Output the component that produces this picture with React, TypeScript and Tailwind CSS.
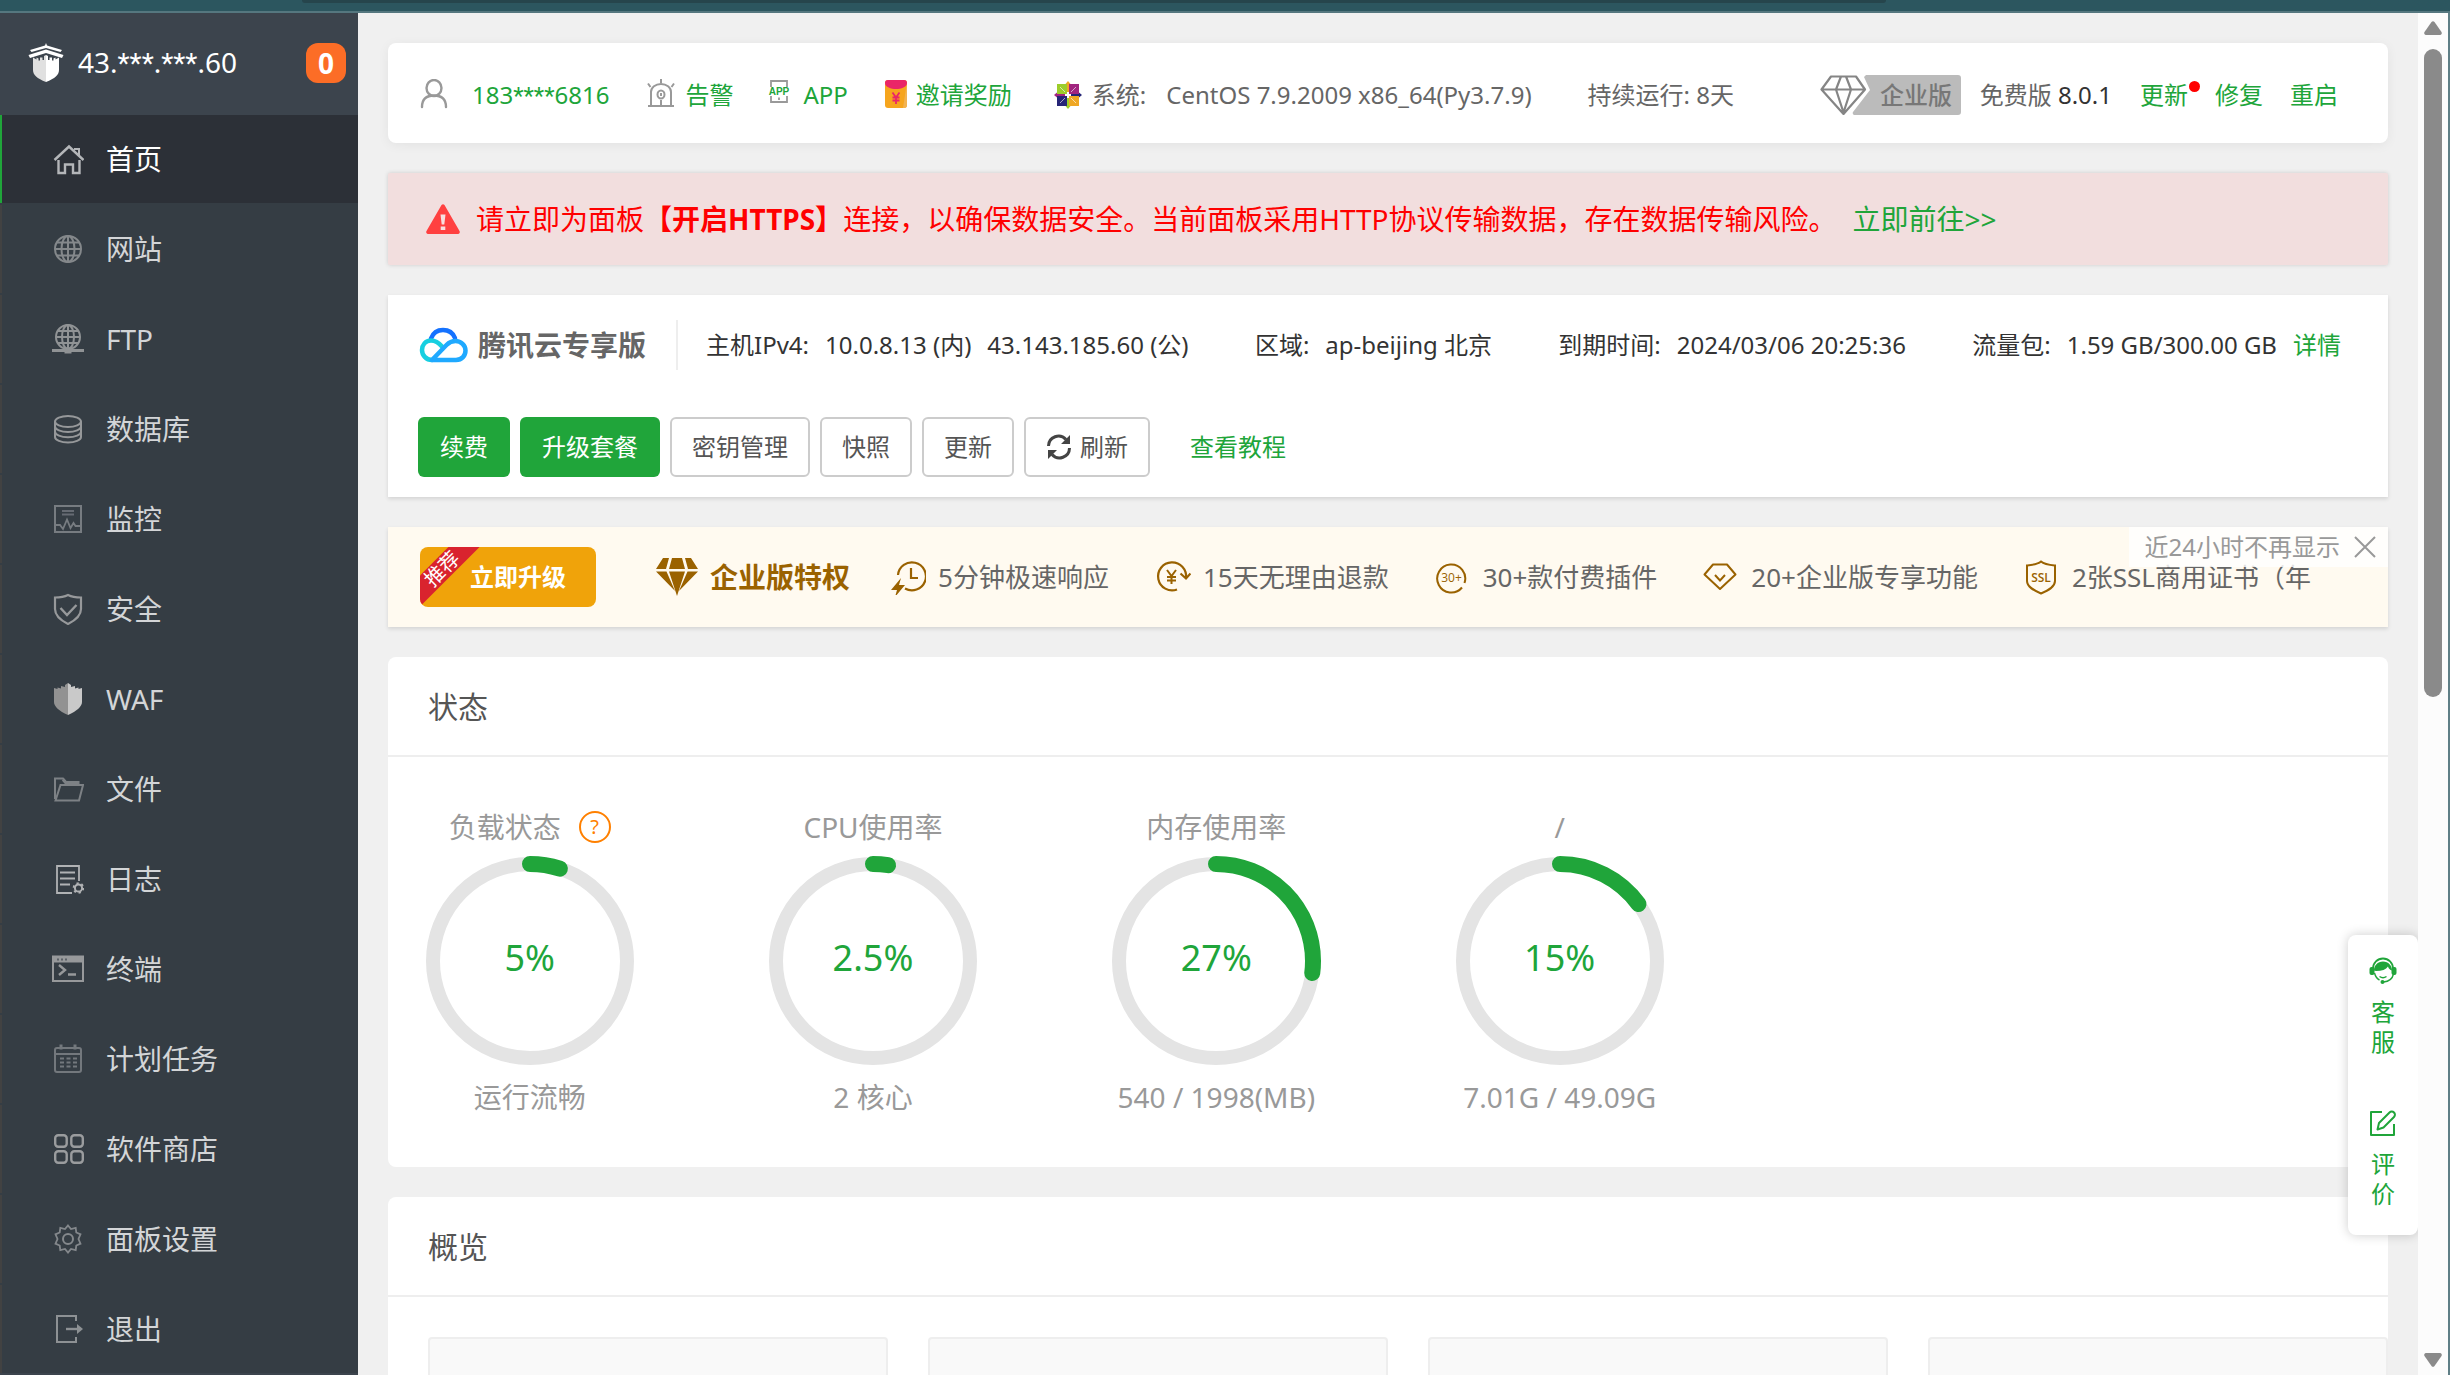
import type { ReactNode } from "react";

const GREEN = "#20a53a";
const BROWN = "#9a6200";

/* ---------- sidebar icons (32x32) ---------- */

function MenuIcon({ children, color = "#8d9093" }: { children: ReactNode; color?: string }) {
  return (
    <svg className="size-8 shrink-0" viewBox="0 0 32 32" fill="none" stroke={color} strokeWidth="2" aria-hidden="true">
      {children}
    </svg>
  );
}

const HomeIcon = (
  <MenuIcon color="#b4b6b9">
    <path d="M2.5 17 17 3.500 31.500 17" strokeWidth="2.4" />
    <path d="M22 6h5v6" />
    <path d="M6.500 17v13H13v-8.500h8V30h6.500V17" strokeWidth="2.4" />
  </MenuIcon>
);
const GlobeIcon = (
  <MenuIcon color="#84888b">
    <circle cx="16" cy="16" r="13" />
    <ellipse cx="16" cy="16" rx="6.5" ry="13" />
    <path d="M16 3v26M3 16h26M5 9.500h22M5 22.500h22" />
  </MenuIcon>
);
const FtpIcon = (
  <MenuIcon color="#909395">
    <circle cx="16" cy="14" r="12" />
    <ellipse cx="16" cy="14" rx="6" ry="12" />
    <path d="M16 2v24M4 14h24M6 8h20M6 20h20" />
    <path d="M0 27.500h32" strokeWidth="3" />
    <path d="M12.500 27.500h7" strokeWidth="6" />
  </MenuIcon>
);
const DatabaseIcon = (
  <MenuIcon color="#96989a">
    <ellipse cx="16" cy="8.5" rx="13" ry="5.5" />
    <path d="M3 8.500V24c0 3 6 5.500 13 5.500S29 27 29 24V8.500" />
    <path d="M3 13.500c0 3 6 5.500 13 5.500s13-2.500 13-5.500M3 18.700c0 3 6 5.500 13 5.500s13-2.500 13-5.500" />
  </MenuIcon>
);
const MonitorIcon = (
  <MenuIcon color="#777c81">
    <rect x="3" y="3" width="26" height="26" />
    <path d="M10 8h12M10 11.500h12" strokeWidth="2.2" stroke="#666b73" />
    <path d="M4 22h4l3 4 4-9.500 3.500 8.500 3-5 2 3h5" strokeWidth="1.8" />
  </MenuIcon>
);
const SafeIcon = (
  <MenuIcon color="#97999b">
    <path d="M16 2c4 2 8 2.500 13 2.500V16c0 7-6 11.500-13 15C9 27.500 3 23 3 16V4.500C8 4.500 12 4 16 2Z" strokeWidth="2.2" />
    <path d="m8.500 15 6.500 7 9.500-10" strokeWidth="2.4" />
  </MenuIcon>
);
const WafIcon = (
  <MenuIcon>
    <path d="M16 0v32C7 28 2 23.500 2 19V5l3.500 1V4.500L9 5.500V3l4 1V2Z" fill="#929292" stroke="none" />
    <path d="M16 0v32c9-4 14-8.500 14-13V5l-3.500 1V4.500L23 5.500V3l-4 1V2Z" fill="#c9c9c9" stroke="none" />
  </MenuIcon>
);
const FolderIcon = (
  <MenuIcon color="#7d8185">
    <path d="M3 26V5.500h8l3 3.500h12.500v3" />
    <path d="M11 6.500 14 10h13" strokeWidth="3" />
    <path d="M3.500 27.500 8.500 12H31l-4 15.500Z" />
  </MenuIcon>
);
const LogIcon = (
  <MenuIcon color="#b0b2b4">
    <path d="M20 30H5V3h22v15" strokeWidth="1.8" />
    <path d="M8 9.500h15M8 15.500h15M8 21.500h10" strokeWidth="1.8" />
    <circle cx="26.5" cy="25" r="3.6" />
    <circle cx="26.5" cy="25" r="4.8" strokeDasharray="2.2 2.8" />
  </MenuIcon>
);
const TerminalIcon = (
  <MenuIcon color="#97999b">
    <rect x="1" y="3.5" width="30" height="24.5" />
    <path d="M1 6.500h30" strokeWidth="6" />
    <path d="M5 6.500h10" stroke="#5b6167" strokeDasharray="2 2" />
    <path d="m7 12 6 5-6 5M16 21.500h8" strokeWidth="2.4" />
  </MenuIcon>
);
const CalendarIcon = (
  <MenuIcon color="#73787d">
    <rect x="3" y="5" width="26" height="24" rx="2" />
    <path d="M3 11h26" />
    <path d="M9 1.500v5M23 1.500v5" strokeWidth="3" />
    <path d="M8 15.500h17M8 19.500h17M8 23.500h17" strokeDasharray="4 2.5" />
  </MenuIcon>
);
const StoreIcon = (
  <MenuIcon color="#9a9c9e">
    <rect x="3.2" y="2.2" width="11.5" height="11.5" rx="3" strokeWidth="2.4" />
    <rect x="19.3" y="2.2" width="11.5" height="11.5" rx="3" strokeWidth="2.4" />
    <rect x="3.2" y="18.3" width="11.5" height="11.5" rx="3" strokeWidth="2.4" />
    <rect x="19.3" y="18.3" width="11.5" height="11.5" rx="3" strokeWidth="2.4" />
  </MenuIcon>
);
const GearIcon = (
  <MenuIcon color="#84888c">
    <path d="m16 2.500 3 3.600 4.700-1.300.6 4.700 4.200 1.800L26.500 16l2 4.700-4.200 1.800-.6 4.700-4.700-1.300-3 3.600-3-3.600-4.700 1.300-.6-4.700-4.200-1.800 2-4.700-2-4.700 4.200-1.800.6-4.700L13 6.100Z" strokeWidth="1.8" />
    <circle cx="16" cy="16" r="5" />
  </MenuIcon>
);
const ExitIcon = (
  <MenuIcon color="#8d9194">
    <path d="M24 8V3H5v26h19v-5" />
    <path d="M14 16h15" strokeWidth="2.4" />
    <path d="m25 11 6 5-6 5Z" fill="#8d9194" stroke="none" />
  </MenuIcon>
);

const MENU: { label: string; icon: ReactNode }[] = [
  { label: "首页", icon: HomeIcon },
  { label: "网站", icon: GlobeIcon },
  { label: "FTP", icon: FtpIcon },
  { label: "数据库", icon: DatabaseIcon },
  { label: "监控", icon: MonitorIcon },
  { label: "安全", icon: SafeIcon },
  { label: "WAF", icon: WafIcon },
  { label: "文件", icon: FolderIcon },
  { label: "日志", icon: LogIcon },
  { label: "终端", icon: TerminalIcon },
  { label: "计划任务", icon: CalendarIcon },
  { label: "软件商店", icon: StoreIcon },
  { label: "面板设置", icon: GearIcon },
  { label: "退出", icon: ExitIcon },
];

function Stars({ n }: { n: number }) {
  return <span className="font-['Roboto']">{"*".repeat(n)}</span>;
}

function Sidebar() {
  return (
    <aside className="flex w-[358px] shrink-0 flex-col bg-[#3c444d]">
      <div className="flex h-[102px] items-center pr-3 pb-0.5 pl-7">
        <svg className="h-10 w-9 shrink-0" viewBox="0 0 36 40" aria-label="宝塔" role="img">
          <path d="M18 0l1 2.500L34 7l-1.500 2L18 5 3.500 9 2 7l15-4.500Z" fill="#fff" />
          <path d="M18 6.500 35.500 12l-1.500 3-16-5-16 5-1.500-3Z" fill="#fff" />
          <path d="M18 12v27C9 35.500 5 32 5 27V14.500l3.500 2v-2l2 1v2h1.500v-3h2.500V17h1.500v-4Z" fill="#e0e0e0" />
          <path d="M18 12v27c9-3.500 13-7 13-12V14.500l-3.500 2v-2l-2 1v2H24v-3h-2.500V17H20v-4Z" fill="#fff" />
        </svg>
        <span className="pl-3.5 text-[28px] leading-10 text-white">
          43.
          <Stars n={3} />.<Stars n={3} />
          .60
        </span>
        <button type="button" className="ml-auto size-10 rounded-xl bg-[#fc6d26] text-[28px] leading-10 font-bold text-white">
          0
        </button>
      </div>
      <nav className="flex flex-col gap-0.5 bg-[#353d44]">
        {MENU.map((m, i) => (
          <a
            key={m.label}
            href="#"
            className={
              i === 0
                ? "flex h-[88px] items-center gap-[22px] border-l-2 border-[#20a53a] bg-[#2c3037] pl-[50px] text-[28px] leading-10 text-white"
                : "flex h-[88px] items-center gap-[22px] border-l-2 border-[#424242] pl-[50px] text-[28px] leading-10 text-[#d3d5d7]"
            }
          >
            {m.icon}
            {m.label}
          </a>
        ))}
      </nav>
    </aside>
  );
}

/* ---------- top bar ---------- */

function TopInfo() {
  return (
    <section className="flex h-[100px] items-center rounded-lg bg-white pt-1 pr-[50px] pl-8 text-2xl leading-9 text-[#666] shadow-[0_2px_12px_rgba(0,0,0,0.06)]">
      <svg className="h-8 w-7" viewBox="0 0 28 32" fill="none" stroke="#999" strokeWidth="2.4" strokeLinecap="round" aria-hidden="true">
        <ellipse cx="14" cy="9" rx="7.5" ry="8" />
        <path d="M2 28c0-8 4.500-11.500 12-11.500S26 20 26 28" />
      </svg>
      <a href="#" className="ml-6 text-[#20a53a]">
        183
        <Stars n={4} />
        6816
      </a>
      <a href="#" className="ml-[38px] flex items-center gap-2.5 text-[#20a53a]">
        <svg className="h-8 w-7" viewBox="0 0 28 32" fill="none" stroke="#999" strokeWidth="2" aria-hidden="true">
          <path d="M14 0v4M1 4.500 3.500 8M27 4.500 24.500 8" />
          <path d="M4 26V13a10 8 0 0 1 20 0v13M1 27h26" />
          <ellipse cx="14" cy="15.500" rx="3.5" ry="4" />
          <path d="M14 14v3M14 21v5" />
        </svg>
        告警
      </a>
      <a href="#" className="ml-[34px] flex items-center gap-3 text-[#20a53a]">
        <svg className="h-8 w-6" viewBox="0 0 24 32" fill="none" stroke="#999" strokeWidth="1.8" aria-hidden="true">
          <path d="M4 8V2h16v6M4 17v6h16v-6M12 18.500v2.500" />
          <text x="12" y="16" textAnchor="middle" fontSize="10" fontWeight="700" fontFamily="Liberation Sans" fill={GREEN} stroke="none">
            APP
          </text>
        </svg>
        APP
      </a>
      <a href="#" className="ml-9 flex items-center gap-2 text-[#20a53a]">
        <svg className="h-8 w-6" viewBox="0 0 24 32" aria-hidden="true">
          <rect x="1" y="1" width="22" height="28" rx="3" fill="#f6a51d" />
          <path d="M23 3v23a3 3 0 0 1-3 3h-1Z" fill="#f2b351" />
          <path d="M1 4a3 3 0 0 1 3-3h16a3 3 0 0 1 3 3c0 4-6 6-11 6S1 8 1 4Z" fill="#ea2568" />
          <path d="m8.500 13.500 3.500 5 3.500-5M12 18v7M8.500 18.500h7M8.500 21.500h7" stroke="#ea2568" strokeWidth="1.8" fill="none" />
        </svg>
        邀请奖励
      </a>
      <div className="ml-[42px] flex items-center gap-2.5">
        <svg className="size-7" viewBox="0 0 28 28" aria-hidden="true">
          <rect x="3" y="3" width="10" height="10" fill="#9ccd2a" />
          <rect x="15" y="3" width="10" height="10" fill="#a1257f" />
          <rect x="3" y="15" width="10" height="10" fill="#262577" />
          <rect x="15" y="15" width="10" height="10" fill="#efa724" />
          <path d="m6 6 5 5M22 6l-5 5M6 22l5-5M22 22l-5-5" stroke="#fff" strokeOpacity="0.6" />
          <path d="M14 2v9" stroke="#efa724" strokeWidth="2" />
          <path d="M14 17v9" stroke="#9ccd2a" strokeWidth="2" />
          <path d="M2 14h9" stroke="#a1257f" strokeWidth="2" />
          <path d="M17 14h9" stroke="#262577" strokeWidth="2" />
          <path d="m14 0 2.500 3h-5Z" fill="#efa724" />
          <path d="m14 28 2.500-3h-5Z" fill="#9ccd2a" />
          <path d="m0 14 3-2.500v5Z" fill="#a1257f" />
          <path d="m28 14-3-2.500v5Z" fill="#262577" />
        </svg>
        系统:
      </div>
      <span className="ml-5">CentOS 7.9.2009 x86_64(Py3.7.9)</span>
      <span className="ml-14">持续运行: 8天</span>

      <button type="button" className="ml-auto flex items-center" aria-label="企业版">
        <svg className="h-10 w-[142px]" viewBox="0 0 142 40" fill="none">
          <path d="M46 0h92a3 3 0 0 1 3 3v34a3 3 0 0 1-3 3H35a2 2 0 0 1-2-3l17-22-6-13Z" fill="#bbb" />
          <path d="M11 1.500h25l9 13L23.500 39 1.500 14.500ZM1.500 14.500H45M16 14.500l7.500 23L31 14.500M21 1.500l-5 13M26 1.500l5 13" stroke="#858585" strokeWidth="2.2" strokeLinejoin="round" />
          <text x="60" y="29" fontSize="24" fontFamily="Noto Sans CJK SC" fontWeight="500" fill="#777">
            企业版
          </text>
        </svg>
      </button>
      <span className="ml-[18px]">
        免费版 <span className="text-[#333]">8.0.1</span>
      </span>
      <a href="#" className="relative ml-7 text-[#20a53a]">
        更新
        <span className="absolute top-1 -right-3 size-[11px] rounded-full bg-[red]" />
      </a>
      <a href="#" className="ml-[27px] text-[#20a53a]">
        修复
      </a>
      <a href="#" className="ml-[27px] text-[#20a53a]">
        重启
      </a>
    </section>
  );
}

function HttpsAlert() {
  return (
    <section className="flex h-[92px] items-center rounded-xs bg-[#f2dede] pl-[38px] text-[28px] leading-10 text-[red] shadow-[0_0_4px_rgba(0,0,0,0.15)]">
      <svg className="mr-4 h-[30px] w-[34px] shrink-0" viewBox="0 0 34 30" aria-hidden="true">
        <path d="M15.500 1a2 2 0 0 1 3 0l15 26a2 2 0 0 1-1.500 3H2a2 2 0 0 1-1.500-3Z" fill="#ff4040" />
        <path d="M14.500 10.500h5l-1.200 10h-2.600ZM14.700 22.500h4.600v3.500h-4.600Z" fill="#f7dede" />
      </svg>
      <p>
        请立即为面板<strong>【开启HTTPS】</strong>连接，以确保数据安全。当前面板采用HTTP协议传输数据，存在数据传输风险。
      </p>
      <a href="#" className="ml-4 text-[#20a53a]">
        立即前往&gt;&gt;
      </a>
    </section>
  );
}

/* ---------- Tencent cloud card ---------- */

const outlineBtn = "flex h-[60px] items-center gap-2 rounded-md border-2 border-[#ccc] bg-white px-5 text-2xl leading-9 text-[#555]";
const solidBtn = "flex h-[60px] items-center rounded-md bg-[#20a53a] px-[22px] text-2xl leading-9 text-white";

function CloudCard() {
  return (
    <section className="h-[202px] bg-white px-[30px] pt-[25px] text-2xl leading-9 text-[#333] shadow-[0_2px_4px_rgba(0,0,0,0.12)]">
      <div className="flex h-[50px] items-center">
        <svg className="h-9 w-[50px]" viewBox="0 0 50 36" fill="none" strokeWidth="4.5" strokeLinecap="round" aria-hidden="true">
          <path d="M13 11.500C15 6 19.500 3 25 3c5.500 0 10 3 12 8" stroke="#1472ff" />
          <path d="M24 19.500c-3-3.500-6-6-11-6C7.500 13.500 4 18 4 23s4 10 10 10" stroke="#17cfe0" />
          <path d="M14 33h24c6 0 9.500-4.500 9.500-9.500S43 14 37.500 14c-4 0-6.500 1.500-9 4L14 33" stroke="#1fa9ff" />
        </svg>
        <h2 className="pr-[30px] pl-2.5 text-[28px] leading-10 font-bold text-[#666]">腾讯云专享版</h2>
        <div className="flex h-[50px] grow items-center justify-between border-l-2 border-[#eee] pr-[17px] pl-7">
          <span className="flex gap-4">
            <span>主机IPv4:</span>
            <span>10.0.8.13 (内)</span>
            <span>43.143.185.60 (公)</span>
          </span>
          <span className="flex gap-4">
            <span>区域:</span>
            <span>ap-beijing 北京</span>
          </span>
          <span className="flex gap-4">
            <span>到期时间:</span>
            <span>2024/03/06 20:25:36</span>
          </span>
          <span className="flex gap-4">
            <span>流量包:</span>
            <span>1.59 GB/300.00 GB</span>
            <a href="#" className="text-[#20a53a]">
              详情
            </a>
          </span>
        </div>
      </div>
      <div className="mt-[47px] flex items-center gap-2.5">
        <button type="button" className={solidBtn}>续费</button>
        <button type="button" className={solidBtn}>升级套餐</button>
        <button type="button" className={outlineBtn}>密钥管理</button>
        <button type="button" className={outlineBtn}>快照</button>
        <button type="button" className={outlineBtn}>更新</button>
        <button type="button" className={outlineBtn}>
          <svg className="size-[26px]" viewBox="0 0 26 26" fill="none" stroke="#444" strokeWidth="3" aria-hidden="true">
            <path d="M2.500 12A10 10 0 0 1 20 5.500M23.500 14A10 10 0 0 1 6 20.500" />
            <path d="M24 1v9h-9ZM2 25v-9h9Z" fill="#444" stroke="none" />
          </svg>
          刷新
        </button>
        <a href="#" className="ml-[30px] text-[#20a53a]">
          查看教程
        </a>
      </div>
    </section>
  );
}

/* ---------- upgrade banner ---------- */

function Perk({ children, text }: { children: ReactNode; text: string }) {
  return (
    <li className="flex shrink-0 items-center gap-3">
      <svg className="size-9 shrink-0" viewBox="0 0 36 36" fill="none" stroke={BROWN} strokeWidth="1.8" aria-hidden="true">
        {children}
      </svg>
      {text}
    </li>
  );
}

function UpgradeBanner() {
  return (
    <section className="relative flex h-[100px] items-center overflow-hidden bg-[#fffaf0] pr-[60px] pl-8 text-[#666] shadow-[0_2px_4px_rgba(0,0,0,0.12)]">
      <button type="button" className="relative h-[60px] w-[176px] shrink-0 overflow-hidden rounded-lg bg-[#f0a30a] pl-5 text-2xl leading-9 font-bold text-white">
        立即升级
        <span className="absolute top-[11px] -left-7 h-[22px] w-[100px] -rotate-45 bg-[#d9232e] text-center text-xl leading-[22px] font-normal">
          推荐
        </span>
      </button>
      <svg className="ml-[60px] h-[38px] w-[42px] shrink-0" viewBox="0 0 42 38" fill={BROWN} aria-hidden="true">
        <path d="M7 0h6l-3 11H0ZM16 0h10l3 11H13ZM29 0h6l7 11H32ZM0 13.500h10.500L19 33ZM13 13.500h16L21 38ZM31.500 13.500H42L23 33Z" />
      </svg>
      <h2 className="ml-3 shrink-0 text-[28px] leading-10 font-bold text-[#9a6200]">企业版特权</h2>
      <ul className="ml-10 flex items-center gap-[46px] text-[26px] leading-10 whitespace-nowrap">
        <Perk text="5分钟极速响应">
          <path d="M8 16a14 14 0 1 1 7 13.500" strokeWidth="2.2" />
          <path d="M21 9v10h7" strokeWidth="2.2" />
          <path d="M11 19 1 31h6l-2 7 10-12H9Z" fill={BROWN} stroke="none" />
        </Perk>
        <Perk text="15天无理由退款">
          <path d="M22 30.500A14 14 0 1 1 31 19" strokeWidth="2.2" />
          <path d="m25.500 14.500 5.500 5 4.500-5" strokeWidth="2.2" />
          <path d="m12 11 4.500 6 4.500-6M16.500 17v8M12 18h9M12 21.500h9" strokeWidth="2" />
        </Perk>
        <Perk text="30+款付费插件">
          <path d="M29.500 24A14 14 0 1 0 27 28.500" strokeWidth="2" />
          <text x="16.5" y="23" textAnchor="middle" fontSize="12" fontWeight="500" fontFamily="Open Sans" fill={BROWN} stroke="none">
            30+
          </text>
        </Perk>
        <Perk text="20+企业版专享功能">
          <path d="M10 5.500h14l8.500 10L17 30 1.500 15.500Z" strokeWidth="2" strokeLinejoin="round" />
          <path d="m12 16 5 5.500 5-5.500" strokeWidth="2" />
        </Perk>
        <Perk text="2张SSL商用证书（年">
          <path d="M17 2.500c3.500 3 9 3.500 14 4V22c0 6-7 9.500-14 12.500C10 31.500 3 28 3 22V6.500c5-.5 10.500-1 14-4Z" strokeWidth="2" />
          <text x="17" y="23" textAnchor="middle" fontSize="12" fontWeight="600" fontFamily="Open Sans" fill={BROWN} stroke="none">
            SSL
          </text>
        </Perk>
      </ul>
      <button type="button" className="absolute top-0 right-0 flex h-10 items-center gap-3.5 bg-white/80 pr-3 pl-4 text-2xl leading-9 text-[#999]">
        近24小时不再显示
        <svg className="size-[22px]" viewBox="0 0 22 22" stroke="#999" strokeWidth="2" aria-hidden="true">
          <path d="m1 1 20 20M21 1 1 21" />
        </svg>
      </button>
    </section>
  );
}

/* ---------- status gauges ---------- */

type Gauge = { title: string; value: number; note: string; help?: boolean };

const GAUGES: Gauge[] = [
  { title: "负载状态", value: 5, note: "运行流畅", help: true },
  { title: "CPU使用率", value: 2.5, note: "2 核心" },
  { title: "内存使用率", value: 27, note: "540 / 1998(MB)" },
  { title: "/", value: 15, note: "7.01G / 49.09G" },
];

function GaugeRing({ g }: { g: Gauge }) {
  return (
    <div className="flex flex-col items-center text-[28px] leading-10 text-[#999]">
      <h3 className="flex items-center gap-[18px]">
        {g.title}
        {g.help && (
          <button type="button" className="size-8 rounded-full border-2 border-[#ff8000] text-xl leading-7 text-[#ff8000]" aria-label="负载说明">
            ?
          </button>
        )}
      </h3>
      <div className="mt-2 grid size-[212px] place-items-center">
        <svg className="col-start-1 row-start-1 size-[212px] -rotate-90" viewBox="0 0 212 212" fill="none" aria-hidden="true">
          <circle cx="106" cy="106" r="97" stroke="#e4e4e4" strokeWidth="14" />
          <circle cx="106" cy="106" r="97" stroke={GREEN} strokeWidth="16" strokeLinecap="round" pathLength="100" strokeDasharray={`${g.value} 100`} />
        </svg>
        <span className="col-start-1 row-start-1 pb-1.5 text-4xl leading-[48px] text-[#20a53a]">{g.value}%</span>
      </div>
      <p className="mt-2.5">{g.note}</p>
    </div>
  );
}

function PanelTitle({ children }: { children: string }) {
  return <h2 className="h-[100px] border-b-2 border-[#eee] px-10 pt-[26px] text-[30px] leading-[48px] text-[#555]">{children}</h2>;
}

function StatusCard() {
  return (
    <section className="h-[510px] rounded-lg bg-white">
      <PanelTitle>状态</PanelTitle>
      <div className="-mx-[30px] grid grid-cols-6 pt-[50px]">
        {GAUGES.map((g) => (
          <GaugeRing key={g.title} g={g} />
        ))}
      </div>
    </section>
  );
}

function OverviewCard() {
  return (
    <section className="rounded-lg bg-white">
      <PanelTitle>概览</PanelTitle>
      <div className="grid grid-cols-4 gap-10 pt-10 pl-10">
        {[0, 1, 2, 3].map((i) => (
          <div key={i} className="h-40 rounded-sm border-2 border-[#eee] bg-[#f9f9f9]" />
        ))}
      </div>
    </section>
  );
}

/* ---------- floating service panel ---------- */

function ServicePanel() {
  return (
    <div className="absolute top-[922px] right-0 flex h-[300px] w-[70px] flex-col items-center rounded-lg bg-white pt-[22px] text-2xl leading-[30px] text-[#20a53a] shadow-[0_0_12px_rgba(0,0,0,0.2)]">
      <button type="button" className="flex w-7 flex-col items-center">
        <svg className="size-7" viewBox="0 0 28 28" aria-hidden="true">
          <path d="M4 11.500a10 10 0 0 1 20 0" fill="none" stroke={GREEN} strokeWidth="1.8" />
          <path d="M14 4.500c5.500 0 9 4 9 9-2-.5-3.500-2-4-4-2 3-6 4.500-12 4.500l-2-.5c0-5 3.500-9 9-9Z" fill={GREEN} />
          <rect x="0.5" y="10" width="5" height="8" rx="2" fill={GREEN} />
          <rect x="22.5" y="10" width="5" height="8" rx="2" fill={GREEN} />
          <path d="M5.500 16c1 4 3 6 5 7M24.500 17c-1 4.500-4.500 7.500-10 8M10.500 19.500c2 1.500 5 1.500 7 0" fill="none" stroke={GREEN} strokeWidth="1.4" />
          <circle cx="13.5" cy="25" r="2" fill={GREEN} />
        </svg>
        <span className="mt-3">客服</span>
      </button>
      <button type="button" className="mt-[52px] flex w-7 flex-col items-center">
        <svg className="size-7" viewBox="0 0 28 28" fill="none" stroke={GREEN} strokeWidth="2" strokeLinejoin="round" aria-hidden="true">
          <path d="M13 3H2v23h23V15" />
          <path d="M8.500 20.500 10 14 20.500 3.500a3 3 0 0 1 4.500 4.500L14.500 18.500Z" />
        </svg>
        <span className="mt-3">评价</span>
      </button>
    </div>
  );
}

function ScrollRail() {
  return (
    <div className="flex w-8 shrink-0 flex-col items-center border-r-2 border-[#5f7f86] bg-[#fcfcfc] pt-2 pb-2" aria-hidden="true">
      <svg className="h-[14px] w-[18px]" viewBox="0 0 18 14" fill="#8a8a8a">
        <path d="M7.500 1a2 2 0 0 1 3 0L17.500 11a2 2 0 0 1-1.500 3H2a2 2 0 0 1-1.500-3Z" />
      </svg>
      <div className="mt-3.5 h-[648px] w-[18px] rounded-full bg-[#8a8a8a]" />
      <svg className="mt-auto h-[14px] w-[18px]" viewBox="0 0 18 14" fill="#8a8a8a">
        <path d="M7.500 13a2 2 0 0 0 3 0L17.500 3A2 2 0 0 0 16 0H2A2 2 0 0 0 .5 3Z" />
      </svg>
    </div>
  );
}

export default function App() {
  return (
    <div className="flex h-screen flex-col overflow-hidden bg-[#f0f0f0] font-['Noto_Sans','Noto_Sans_CJK_SC',sans-serif]">
      <header className="h-[13px] shrink-0 border-b-2 border-[#55777f] bg-[#2c565f] px-[302px]">
        <div className="mr-[262px] h-[3px] rounded-b-lg bg-[#26454c]" />
      </header>
      <div className="flex min-h-0 grow">
        <Sidebar />
        <div className="relative flex min-w-0 grow overflow-hidden">
          <main className="flex min-w-0 grow flex-col gap-[30px] px-[30px] pt-[30px] *:shrink-0">
            <TopInfo />
            <HttpsAlert />
            <CloudCard />
            <UpgradeBanner />
            <StatusCard />
            <OverviewCard />
          </main>
          <ServicePanel />
        </div>
        <ScrollRail />
      </div>
    </div>
  );
}
